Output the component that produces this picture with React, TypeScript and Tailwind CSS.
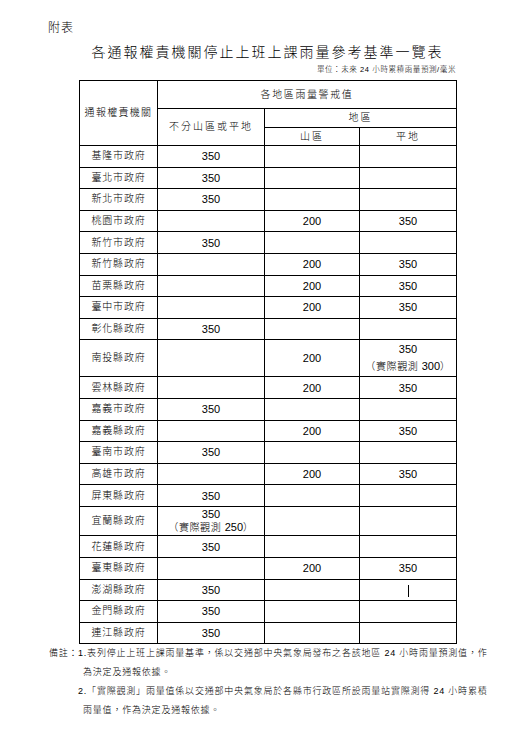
const rows: { name: string; all?: string; mountain?: string; plain?: string; note?: string; tall?: "nantou" | "yilan"; mark?: boolean }[] = [
  { name: "基隆市政府", all: "350" },
  { name: "臺北市政府", all: "350" },
  { name: "新北市政府", all: "350" },
  { name: "桃園市政府", mountain: "200", plain: "350" },
  { name: "新竹市政府", all: "350" },
  { name: "新竹縣政府", mountain: "200", plain: "350" },
  { name: "苗栗縣政府", mountain: "200", plain: "350" },
  { name: "臺中市政府", mountain: "200", plain: "350" },
  { name: "彰化縣政府", all: "350" },
  { name: "南投縣政府", mountain: "200", plain: "350", note: "300", tall: "nantou" },
  { name: "雲林縣政府", mountain: "200", plain: "350" },
  { name: "嘉義市政府", all: "350" },
  { name: "嘉義縣政府", mountain: "200", plain: "350" },
  { name: "臺南市政府", all: "350" },
  { name: "高雄市政府", mountain: "200", plain: "350" },
  { name: "屏東縣政府", all: "350" },
  { name: "宜蘭縣政府", all: "350", note: "250", tall: "yilan" },
  { name: "花蓮縣政府", all: "350" },
  { name: "臺東縣政府", mountain: "200", plain: "350" },
  { name: "澎湖縣政府", all: "350", mark: true },
  { name: "金門縣政府", all: "350" },
  { name: "連江縣政府", all: "350" },
];

function Value({ value, note, leading }: { value?: string; note?: string; leading: string }) {
  if (!value) return null;
  if (!note) return <span className="block text-[11px] leading-[12px]">{value}</span>;
  return (
    <div className="flex flex-col items-center">
      <span className={`block text-[11px] ${leading}`}>{value}</span>
      <span className={`block text-[10px] tracking-[0.6px] ${leading}`}>
        （實際觀測 <span className="text-[11px] tracking-normal">{note}</span>）
      </span>
    </div>
  );
}

export default function App() {
  const cell = "border border-black p-0 text-center align-middle leading-[12px] overflow-hidden";
  return (
    <div className="h-[746px] w-[511px] overflow-hidden bg-white pt-[20px] font-['Liberation_Sans','Noto_Sans_CJK_TC',sans-serif] font-light text-black">
      <div className="ml-[48px] w-[439px]">
        <p className="text-[12px] leading-[16px] tracking-[1px]">附表</p>
        <h1 className="mt-[6px] text-center text-[14px] leading-[20px] tracking-[2px]">
          各通報權責機關停止上班上課雨量參考基準一覽表
        </h1>

        <div className="ml-[31px] w-[377px]">
          <p className="mt-[2px] text-right text-[7.5px] leading-[12px] tracking-[0.6px]">
            單位：未來 24 小時累積雨量預測/毫米
          </p>

          {/* table frame: 80px top, ~643px bottom */}
          <table className="mt-[4px] w-[377px] table-fixed border-collapse">
            <colgroup>
              <col className="w-[78px]" />
              <col className="w-[107px]" />
              <col className="w-[95px]" />
              <col className="w-[97px]" />
            </colgroup>
            <thead>
              <tr className="h-[28px]">
                <th rowSpan={3} className={`${cell} text-[10px] font-light tracking-[1.3px]`}>
                  通報權責機關
                </th>
                <th colSpan={3} className={`${cell} text-[10px] font-light tracking-[1.6px]`}>
                  各地區雨量警戒值
                </th>
              </tr>
              <tr className="h-[19px]">
                <th rowSpan={2} className={`${cell} text-[10px] font-light tracking-[2px]`}>
                  不分山區或平地
                </th>
                <th colSpan={2} className={`${cell} text-[10px] font-light tracking-[2px]`}>
                  地區
                </th>
              </tr>
              <tr className="h-[18px]">
                <th className={`${cell} text-[10px] font-light tracking-[2px]`}>山區</th>
                <th className={`${cell} text-[10px] font-light tracking-[2px]`}>平地</th>
              </tr>
            </thead>
            <tbody>
              {rows.map((r) => {
                const height = r.tall === "nantou" ? "h-[37px]" : r.tall === "yilan" ? "h-[29.5px]" : "h-[21.6px]";
                const leading = r.tall === "nantou" ? "leading-[17px]" : "leading-[13px]";
                return (
                  <tr key={r.name} className={height}>
                    <td className={`${cell} text-[10px] tracking-[0.8px]`}>{r.name}</td>
                    <td className={cell}>
                      <Value value={r.all} note={r.all ? r.note : undefined} leading={leading} />
                    </td>
                    <td className={cell}>
                      <Value value={r.mountain} leading={leading} />
                    </td>
                    <td className={cell}>
                      {r.mark ? (
                        <span className="inline-block h-[12px] w-px translate-y-[1px] bg-black align-middle" />
                      ) : (
                        <Value value={r.plain} note={r.plain ? r.note : undefined} leading={leading} />
                      )}
                    </td>
                  </tr>
                );
              })}
            </tbody>
          </table>
        </div>
      </div>

      {/* notes */}
      <div className="ml-[49px] flex text-[9px] leading-[19px] tracking-[0.8px]">
        <span className="w-[29px] shrink-0 whitespace-nowrap">備註：</span>
        <div className="whitespace-nowrap">
          <p>1.表列停止上班上課雨量基準，係以交通部中央氣象局發布之各該地區 24 小時雨量預測值，作</p>
          <p className="pl-[5px]">為決定及通報依據。</p>
          <p>2.「實際觀測」雨量值係以交通部中央氣象局於各縣市行政區所設雨量站實際測得 24 小時累積</p>
          <p className="pl-[5px]">雨量值，作為決定及通報依據。</p>
        </div>
      </div>
    </div>
  );
}
